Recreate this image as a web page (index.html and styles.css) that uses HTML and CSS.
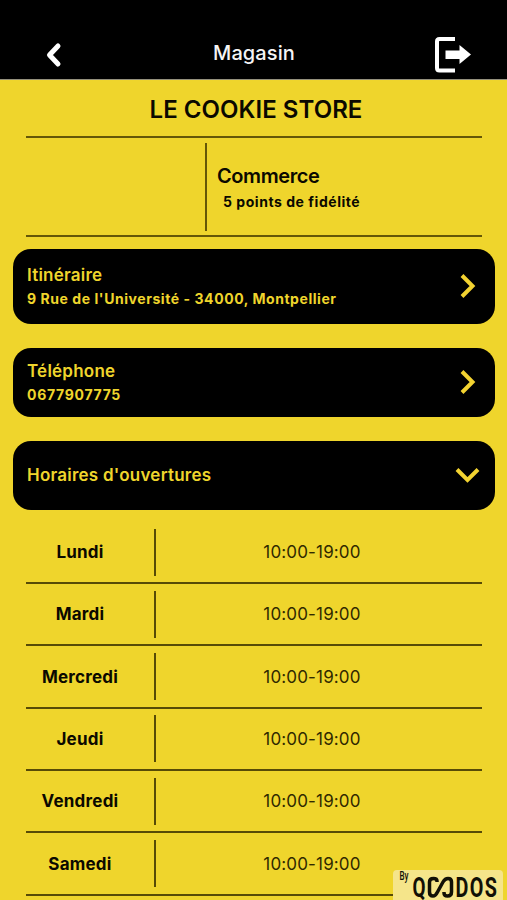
FILE: index.html
```html
<!DOCTYPE html>
<html lang="fr">
<head>
<meta charset="utf-8">
<title>Magasin</title>
<link rel="stylesheet" href="styles.css">
</head>
<body>
<header class="topbar">
  <svg class="back" viewBox="0 0 20 28"><path d="M14 5 5.500 14 14 23"/></svg>
  <h1>Magasin</h1>
  <svg class="exit" viewBox="0 0 38 38"><path class="door" d="M22 3H6.500Q4 3 4 5.500V32Q4 34.500 6.500 34.500H22"/><path class="arrow" d="M12.500 14.500H26.500V9L38 18.500 26.500 28V23H12.500Z"/></svg>
</header>
<main>
  <h2 class="store"><span>LE COOKIE STORE</span></h2>
  <section class="summary">
    <div class="picture"></div>
    <div class="info">
      <p class="kind">Commerce</p>
      <p class="points">5 points de fidélité</p>
    </div>
  </section>
  <section class="card address">
    <div><h3>Itinéraire</h3><p class="street">9 Rue de l'Université - 34000, Montpellier</p></div>
    <svg class="chevron" viewBox="0 0 26 26"><path d="M7 2.500 17.500 13 7 23.500"/></svg>
  </section>
  <section class="card phone">
    <div><h3>Téléphone</h3><p class="number">0677907775</p></div>
    <svg class="chevron" viewBox="0 0 26 26"><path d="M7 2.500 17.500 13 7 23.500"/></svg>
  </section>
  <section class="card hours">
    <h3>Horaires d'ouvertures</h3>
    <svg class="chevron" viewBox="0 0 26 26"><path d="M2 7.500 12.500 18 23 7.500"/></svg>
  </section>
  <section class="week">
    <div class="row"><b>Lundi</b><i></i><span>10:00-19:00</span></div>
    <div class="row"><b>Mardi</b><i></i><span>10:00-19:00</span></div>
    <div class="row"><b>Mercredi</b><i></i><span>10:00-19:00</span></div>
    <div class="row"><b>Jeudi</b><i></i><span>10:00-19:00</span></div>
    <div class="row"><b>Vendredi</b><i></i><span>10:00-19:00</span></div>
    <div class="row"><b>Samedi</b><i></i><span>10:00-19:00</span></div>
  </section>
</main>
<svg class="brand" viewBox="0 0 110 30">
  <text class="by" x="6.500" y="9.500" textLength="9" lengthAdjust="spacingAndGlyphs">By</text>
  <text class="word" x="19.500" y="27" textLength="13" lengthAdjust="spacingAndGlyphs">Q</text>
  <path d="M44 12V11Q44 8.500 40.500 8.500Q36.500 8.500 36.500 12V22Q36.500 26 40 26Q42.500 26 44.500 22L50 12Q52 8.500 55 8.500Q58.500 8.500 58.500 12V22Q58.500 26 54.500 26Q51 26 51 23V22"/>
  <text class="word dos" x="62.500" y="27" textLength="43" lengthAdjust="spacingAndGlyphs">DOS</text>
</svg>
</body>
</html>
```
FILE: styles.css
```css
* { box-sizing: border-box; }
body {
  margin: 0;
  height: 900px;
  overflow: hidden;
  background: #efd52c;
  color: #0b0900;
  font-family: Inter, "Liberation Sans", sans-serif;
}
h1, h2, h3, p { margin: 0; white-space: nowrap; }
.topbar {
  height: 80px;
  padding: 30px 36px 0 44px;
  display: grid;
  grid-template-columns: 38px 1fr 38px;
  align-items: center;
  background: #000;
  border-bottom: 1px solid #94907c;
}
.topbar h1 {
  color: #f5f5f5;
  font-size: 20px;
  line-height: 24px;
  font-weight: 500;
  letter-spacing: 0.1px;
  text-align: center;
  margin: -4px 0 0 -7px;
}
.back { width: 20px; height: 28px; }
.back path { fill: none; stroke: #fff; stroke-width: 5; stroke-linecap: round; stroke-linejoin: round; }
.exit { width: 38px; height: 38px; }
.door { fill: none; stroke: #fff; stroke-width: 4; }
.arrow { fill: #fff; }
.store {
  height: 56px;
  line-height: 59px;
  font-size: 24px;
  font-weight: 600;
  letter-spacing: 0.05px;
  text-align: center;
  padding-left: 5px;
}
.summary {
  height: 101px;
  margin: 0 25px 0 26px;
  padding: 5px 0;
  display: flex;
  border: solid #655707;
  border-width: 2px 0;
}
.picture { width: 181px; height: 88px; border-right: 2px solid #655707; }
.info { padding: 20px 0 0 10px; }
.kind { font-size: 20px; line-height: 26px; font-weight: 600; letter-spacing: -0.4px; }
.points { font-size: 14px; line-height: 25px; font-weight: 700; letter-spacing: 0.54px; padding-left: 6px; }
.card {
  margin: 0 12px 0 13px;
  padding: 0 14px;
  display: flex;
  align-items: center;
  justify-content: space-between;
  border-radius: 18px;
  background: #000;
  color: #efd52c;
}
.card h3 { font-size: 17px; line-height: 24px; font-weight: 600; letter-spacing: 0.23px; }
.card p { font-size: 14px; line-height: 24px; font-weight: 700; }
.card .street { letter-spacing: 0.56px; }
.card .number { letter-spacing: 0.7px; }
.address { height: 74.500px; margin-top: 12px; }
.phone { height: 68.500px; margin-top: 24.500px; }
.address div, .phone div { padding-top: 2px; }
.hours { height: 68.500px; margin-top: 24.500px; }
.chevron { width: 26px; height: 26px; }
.chevron path { fill: none; stroke: #f3d331; stroke-width: 4; }
.week { margin: 12.400px 25px 0 26px; }
.row {
  height: 62.300px;
  display: grid;
  grid-template-columns: 108px 20px 1fr;
  align-items: center;
  border-bottom: 2px solid #574b06;
  text-align: center;
  font-size: 17px;
}
.row b { font-weight: 650; letter-spacing: 0.22px; }
.row i { justify-self: end; width: 2px; height: 47px; margin-right: -2px; background: #574b06; }
.row span { padding-right: 12px; color: #302900; letter-spacing: 0.15px; }
.brand {
  position: absolute;
  left: 393px;
  top: 870px;
  width: 110px;
  height: 30px;
  border-radius: 4px 4px 0 0;
  background: #f5e58a;
}
.brand path { fill: none; stroke: #111006; stroke-width: 3.500; }
.brand text { font-family: Roboto, sans-serif; fill: #111006; }
.brand .by { font-size: 12px; font-weight: 500; }
.brand .word { font-size: 27px; font-weight: 700; }
.brand .dos { letter-spacing: 2px; }
```
